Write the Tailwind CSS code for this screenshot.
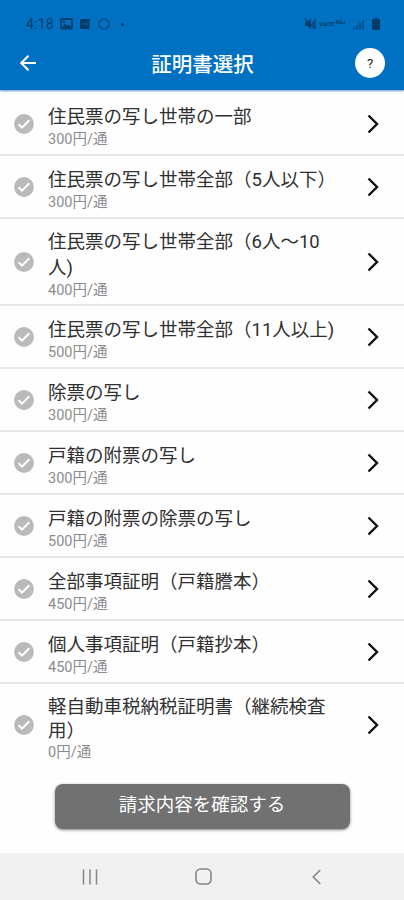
<!DOCTYPE html>
<html lang="ja">
<head>
    <meta charset="UTF-8">
    <meta name="viewport" content="width=device-width, initial-scale=1.0">
    <script src="https://cdn.jsdelivr.net/npm/@tailwindcss/browser@4"></script>
    <title>証明書選択</title>
</head>
<body class="bg-white font-[Roboto,'Noto_Sans_CJK_JP',sans-serif]">
    <div class="flex h-[900px] w-[404px] flex-col overflow-hidden bg-[#fefefe]">
        <!-- Status bar and app bar -->
        <header class="h-[90px] shrink-0 bg-[#0070c3] shadow-[0_1px_2px_rgba(0,80,160,0.6)]">
            <div class="flex h-9 items-center pt-3 pl-[26px] pr-[24px] text-[#053c69]">
                <span class="w-[34px] text-[14px] leading-4 tracking-[0.2px]">4:18</span>
                <svg class="h-3 w-[13px]" viewBox="0 0 13 12" aria-hidden="true">
                    <rect x="1" y="1" width="11" height="9.5" rx="1" fill="none" stroke="currentColor" stroke-width="1.8" />
                    <path d="M2 9.5 5 5.5 7 8 9 6.5 11.5 9.5zM3 3h2v2H3z" fill="currentColor" />
                </svg>
                <svg class="ml-[6px] h-3 w-3" viewBox="0 0 12 12" aria-hidden="true">
                    <path d="M1 2.5Q1 1 2.5 1H11.5l-1 2V9.5Q10.5 11 9 11H2.500Q1 11 1 9.5z" fill="currentColor" />
                    <path d="M3 6h6" stroke="#0070c3" stroke-opacity=".5" stroke-width="1.5" />
                </svg>
                <svg class="ml-[7px] h-3 w-3" viewBox="0 0 12 12" aria-hidden="true">
                    <circle cx="6" cy="6" r="5" fill="none" stroke="currentColor" stroke-opacity=".7" stroke-width="1.6" />
                </svg>
                <span class="ml-[11px] size-[3px] rounded-full bg-[#053c69]"></span>
                <svg class="ml-auto h-3 w-3" viewBox="0 0 12 12" aria-hidden="true">
                    <path d="M1 4h2.5L7 1v10L3.5 8H1z" fill="currentColor" />
                    <path d="M1 1l10 10M9 3.5v4M11 1v10" stroke="currentColor" stroke-width="1.2" fill="none" />
                </svg>
                <span class="ml-[3px] w-[16px] text-[6px] leading-3 font-bold tracking-tighter">VoLTE</span>
                <span class="-mt-[5px] w-[14px] text-[6px] leading-3 font-bold">4G+</span>
                <svg class="ml-[4px] h-3 w-[11px]" viewBox="0 0 11 12" aria-hidden="true">
                    <path d="M1 11.5V9.5M4 11.5V7M7 11.5V4.5M10 11.5V2" stroke="currentColor" stroke-opacity=".75" stroke-width="1.5" />
                </svg>
                <svg class="ml-[8px] h-3 w-2" viewBox="0 0 8 12" aria-hidden="true">
                    <path d="M2.5 0h3v1H7q1 0 1 1v9q0 1-1 1H1q-1 0-1-1V2q0-1 1-1h1.5z" fill="currentColor" />
                </svg>
            </div>
            <div class="flex h-[54px] items-center justify-between pl-5 pr-[19px] text-white">
                <svg class="h-4 w-[30px]" viewBox="0 0 30 16" fill="none" stroke="currentColor" stroke-width="2" aria-hidden="true">
                    <path d="M8.5 .8 1.2 8 8.5 15.2M1.2 8H16" />
                </svg>
                <h1 class="pt-[3px] text-[20.5px] leading-7 font-medium">証明書選択</h1>
                <button class="size-[30px] rounded-full bg-white pt-px text-[13px] leading-[29px] text-[#222]">?</button>
            </div>
        </header>

        <!-- Certificate list -->
        <ul id="list" class="flex flex-col pt-[3px] text-[#303030]"></ul>

        <button class="mx-auto mt-4 h-[45px] w-[295px] shrink-0 rounded-lg bg-[#717171] pb-[4px] text-[18.5px] leading-[26px] text-white shadow-[0_1px_3px_rgba(0,0,0,0.5)]">請求内容を確認する</button>

        <!-- Navigation bar -->
        <nav class="mt-auto flex h-[47px] shrink-0 items-center bg-[#f1f1f1] pl-[82px] text-[#858585]">
            <svg class="h-4 w-4" viewBox="0 0 16 16" stroke="currentColor" stroke-width="1.5" aria-hidden="true">
                <path d="M1.5 .5v15M8 .5v15M14.5 .5v15" />
            </svg>
            <svg class="ml-[97px] h-[17px] w-[17px]" viewBox="0 0 17 17" fill="none" stroke="currentColor" stroke-width="1.6" aria-hidden="true">
                <rect x="1" y="1" width="15" height="15" rx="4.5" />
            </svg>
            <svg class="ml-[100px] h-4 w-[9px]" viewBox="0 0 9 16" fill="none" stroke="currentColor" stroke-width="1.6" aria-hidden="true">
                <path d="M8.3 1 1.2 8l7.1 7" />
            </svg>
        </nav>
    </div>

    <template id="row">
        <li class="flex items-center border-b-2 border-[#e7e7e7] pl-[14px] last:border-transparent">
            <svg class="size-5 shrink-0" viewBox="0 0 20 20" aria-hidden="true">
                <circle cx="10" cy="10" r="9.9" fill="#bababa" />
                <path d="M4.5 10.3 8 13.7 15.3 6.3" fill="none" stroke="#fff" stroke-width="2" />
            </svg>
            <div class="text ml-[14px] w-[290px] self-start">
                <p class="title text-[18.5px]"></p>
                <p class="price text-[14.5px] leading-[20px] text-[#8c8c8c]"></p>
            </div>
            <svg class="ml-[29px] h-5 w-3" viewBox="0 0 12 20" fill="none" stroke="#111" stroke-width="2.4" aria-hidden="true">
                <path d="M1.500 1.500 10 10 1.500 18.500" />
            </svg>
        </li>
    </template>

    <script>
        // title, price, row height, top padding, title line height
        const items = [
            ['住民票の写し世帯の一部', '300円/通', 'h-[63px]', 'pt-[12px]', 'leading-[25px]'],
            ['住民票の写し世帯全部（5人以下）', '300円/通', 'h-[63px]', 'pt-[11px]', 'leading-[26px]'],
            ['住民票の写し世帯全部（6人〜10人)', '400円/通', 'h-[87px]', 'pt-[10px]', 'leading-[26px]'],
            ['住民票の写し世帯全部（11人以上)', '500円/通', 'h-[63px]', 'pt-[11px]', 'leading-[26px]'],
            ['除票の写し', '300円/通', 'h-[63px]', 'pt-[12px]', 'leading-[25px]'],
            ['戸籍の附票の写し', '300円/通', 'h-[63px]', 'pt-[12px]', 'leading-[25px]'],
            ['戸籍の附票の除票の写し', '500円/通', 'h-[63px]', 'pt-[12px]', 'leading-[25px]'],
            ['全部事項証明（戸籍謄本）', '450円/通', 'h-[63px]', 'pt-[12px]', 'leading-[25px]'],
            ['個人事項証明（戸籍抄本）', '450円/通', 'h-[63px]', 'pt-[12px]', 'leading-[25px]'],
            ['軽自動車税納税証明書（継続検査用）', '0円/通', 'h-[84px]', 'pt-[11px]', 'leading-[24px]']
        ];

        const list = document.getElementById('list');
        const template = document.getElementById('row');

        items.forEach(([title, price, height, padding, leading]) => {
            const row = template.content.cloneNode(true);
            row.querySelector('li').classList.add(height);
            row.querySelector('.text').classList.add(padding);
            row.querySelector('.title').classList.add(leading);
            row.querySelector('.title').textContent = title;
            row.querySelector('.price').textContent = price;
            list.appendChild(row);
        });
    </script>
</body>
</html>
